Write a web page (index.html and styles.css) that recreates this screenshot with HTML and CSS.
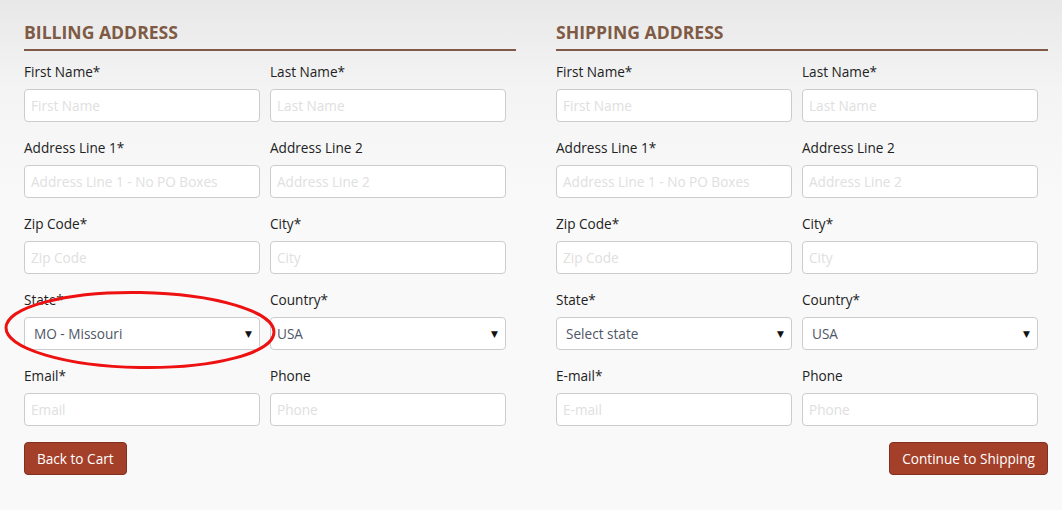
FILE: index.html
```html
<!DOCTYPE html>
<html>
<head>
<meta charset="utf-8">
<link rel="stylesheet" href="styles.css">
</head>
<body>
<div class="page">
  <section class="panel">
    <h2 class="title">BILLING ADDRESS</h2>
    <div class="grid">
      <div class="field"><label>First Name*</label><input class="inp" placeholder="First Name"></div>
      <div class="field"><label>Last Name*</label><input class="inp" placeholder="Last Name"></div>
      <div class="field"><label>Address Line 1*</label><input class="inp" placeholder="Address Line 1 - No PO Boxes"></div>
      <div class="field"><label>Address Line 2</label><input class="inp" placeholder="Address Line 2"></div>
      <div class="field"><label>Zip Code*</label><input class="inp" placeholder="Zip Code"></div>
      <div class="field"><label>City*</label><input class="inp" placeholder="City"></div>
      <div class="field"><label>State*</label><div class="sel wide"><span class="sel-text">MO - Missouri</span><span class="arrow">&#9660;</span></div></div>
      <div class="field"><label>Country*</label><div class="sel narrow"><span class="sel-text">USA</span><span class="arrow">&#9660;</span></div></div>
      <div class="field"><label>Email*</label><input class="inp" placeholder="Email"></div>
      <div class="field"><label>Phone</label><input class="inp" placeholder="Phone"></div>
    </div>
    <div class="actions">
      <button class="btn">Back to Cart</button>
    </div>
  </section>
  <section class="panel">
    <h2 class="title">SHIPPING ADDRESS</h2>
    <div class="grid">
      <div class="field"><label>First Name*</label><input class="inp" placeholder="First Name"></div>
      <div class="field"><label>Last Name*</label><input class="inp" placeholder="Last Name"></div>
      <div class="field"><label>Address Line 1*</label><input class="inp" placeholder="Address Line 1 - No PO Boxes"></div>
      <div class="field"><label>Address Line 2</label><input class="inp" placeholder="Address Line 2"></div>
      <div class="field"><label>Zip Code*</label><input class="inp" placeholder="Zip Code"></div>
      <div class="field"><label>City*</label><input class="inp" placeholder="City"></div>
      <div class="field"><label>State*</label><div class="sel wide"><span class="sel-text">Select state</span><span class="arrow">&#9660;</span></div></div>
      <div class="field"><label>Country*</label><div class="sel"><span class="sel-text">USA</span><span class="arrow">&#9660;</span></div></div>
      <div class="field"><label>E-mail*</label><input class="inp" placeholder="E-mail"></div>
      <div class="field"><label>Phone</label><input class="inp" placeholder="Phone"></div>
    </div>
    <div class="actions right">
      <button class="btn">Continue to Shipping</button>
    </div>
  </section>
  <svg class="circle" width="290" height="90" viewBox="0 0 290 90">
    <ellipse cx="140" cy="45" rx="134" ry="37.5" fill="none" stroke="#ee1111" stroke-width="3" transform="rotate(1 140 45)"/>
  </svg>
</div>
</body>
</html>
```
FILE: styles.css
```css
html, body {
  margin: 0;
  padding: 0;
}
body {
  font-family: "Open Sans", "DejaVu Sans", sans-serif;
  background: linear-gradient(#e8e8e8 0px, #f4f4f4 90px, #f9f9f9 200px, #f9f9f9 100%);
  min-height: 510px;
  color: #222;
}
.page {
  position: relative;
  display: flex;
  gap: 40px;
  padding: 22px 0 0 24px;
}
.panel {
  width: 492px;
}
.title {
  margin: 0;
  font-size: 17.6px;
  line-height: 20px;
  font-weight: 700;
  color: #7f5a45;
  padding-bottom: 7px;
  border-bottom: 2px solid #7f5b47;
}
.grid {
  display: grid;
  grid-template-columns: 236px 236px;
  column-gap: 10px;
  row-gap: 16px;
  margin-top: 11px;
}
.field {
  display: flex;
  flex-direction: column;
}
.field label {
  font-size: 13.6px;
  line-height: 20px;
  color: #222;
  margin-bottom: 7px;
}
.inp {
  box-sizing: border-box;
  height: 33px;
  width: 236px;
  border: 1px solid #cccccc;
  border-radius: 4px;
  background: #fff;
  padding: 0 6px;
  font-family: "Open Sans", sans-serif;
  font-size: 13.6px;
  color: #333;
  outline: none;
}
.inp::placeholder {
  color: #e0e0e0;
}
.sel {
  position: relative;
  box-sizing: border-box;
  height: 33px;
  width: 236px;
  border: 1px solid #cccccc;
  border-radius: 4px;
  background: #fff;
  display: flex;
  align-items: center;
  padding: 0 9px;
  font-size: 13.6px;
  color: #4f5666;
}
.sel.narrow {
  padding-left: 6px;
}
.arrow {
  position: absolute;
  right: 7px;
  top: 11px;
  font-size: 9px;
  line-height: 10px;
  color: #111;
  font-family: "DejaVu Sans", sans-serif;
}
.actions {
  display: flex;
  margin-top: 16px;
}
.actions.right {
  justify-content: flex-end;
}
.btn {
  height: 33px;
  box-sizing: border-box;
  padding: 0 12px;
  background: #a4402a;
  border: 1px solid #83301f;
  border-radius: 4px;
  color: #fff;
  font-family: "Open Sans", sans-serif;
  font-size: 13.6px;
}
.circle {
  position: absolute;
  left: 0;
  top: 285px;
}
```
